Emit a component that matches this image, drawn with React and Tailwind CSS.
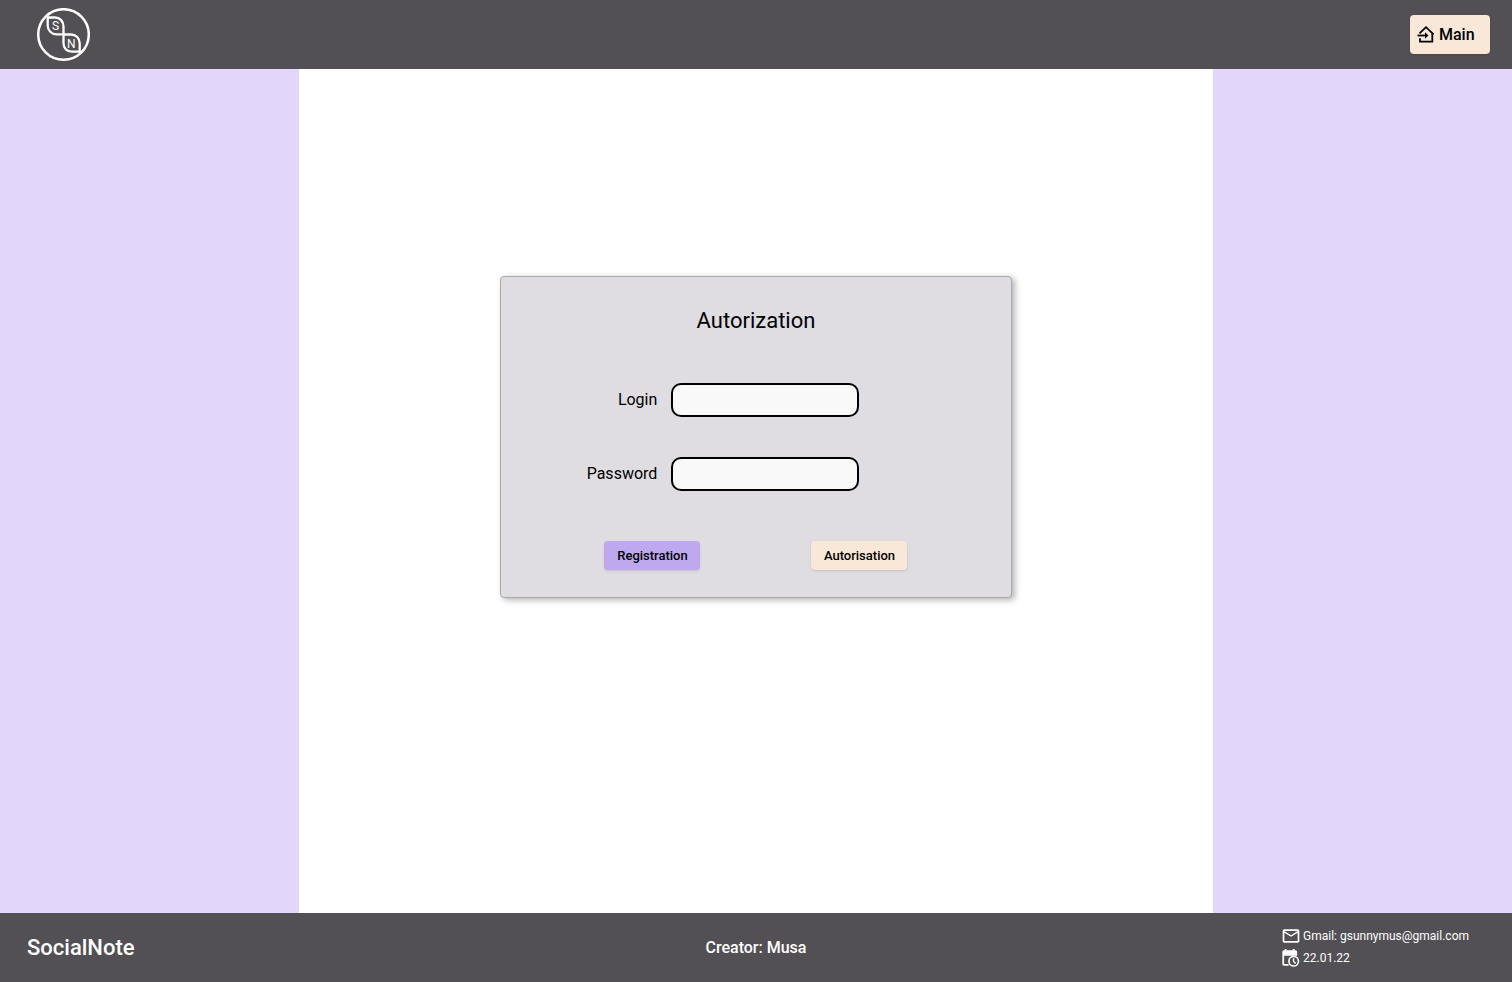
import React from "react";
import { MdOutlineMail } from "react-icons/md";

function Logo() {
  return (
    <svg viewBox="0 0 54 54" className="size-[54px]" role="img" aria-label="SocialNote logo">
      <g fill="none" stroke="white" strokeWidth="2.300">
        <circle cx="27.500" cy="26.500" r="25.300" strokeWidth="2.500" />
        <path d="M11.700 9.500H19C24 9.500 27.500 13.500 27.500 18.500V26.300H20.500C15.500 26.300 11.700 22.500 11.700 17.500Z" />
        <path d="M27.500 26.500H35C40 26.500 43.700 30.300 43.700 35.300V43.700H36C31 43.700 27.500 40.200 27.500 35.200Z" />
      </g>
      <g fill="white" textAnchor="middle" fontFamily="Roboto, sans-serif" fontSize="12">
        <text x="19.600" y="22.300">S</text>
        <text x="35.400" y="39.500">N</text>
      </g>
    </svg>
  );
}

function HomeEnterIcon() {
  return (
    <svg viewBox="0 0 18 18" className="size-[18px]" aria-hidden="true">
      <g fill="none" stroke="currentColor" strokeWidth="1.800">
        <path d="M2.500 7.300L9 1.200L16.600 8.300" />
        <path d="M3 12.300V15.600H15.300V7.300" />
        <path d="M0.500 9.500H9" />
      </g>
      <path d="M8 6.300L11.500 9.500L8 12.700Z" fill="currentColor" />
    </svg>
  );
}

function CalendarClockIcon() {
  return (
    <svg viewBox="0 0 18 18" className="size-5" aria-hidden="true">
      <path
        fill="currentColor"
        d="M3.300 0.800h1.600V2h5.700V0.800h1.600V2h0.800a1.500 1.500 0 0 1 1.500 1.500V7H2.800v7.400h4V16H2.700A1.500 1.500 0 0 1 1.200 14.500V3.500A1.500 1.500 0 0 1 2.700 2H3.300Z"
      />
      <circle cx="11.400" cy="11.900" r="4.300" fill="none" stroke="currentColor" strokeWidth="1.500" />
      <path d="M11.300 9.300V12.100L13.200 13.900" fill="none" stroke="currentColor" strokeWidth="1.200" />
    </svg>
  );
}

function Field({ id, label, type }) {
  return (
    <div className="grid grid-cols-[156fr_339fr] items-center gap-x-[14px]">
      <label htmlFor={id} className="text-right text-base">
        {label}
      </label>
      <input
        id={id}
        type={type}
        className="h-[34px] w-[188px] rounded-[10px] border-2 border-black bg-[#f9f9f9] px-2"
      />
    </div>
  );
}

export default function App() {
  return (
    <div className="flex min-h-screen flex-col bg-[#e2d7fb] font-['Roboto',sans-serif] text-black">
      <header className="flex h-[69px] items-center justify-between bg-[#525055] pr-[22px] pl-9">
        <a href="#home">
          <Logo />
        </a>
        <button
          type="button"
          className="flex h-[39px] w-20 items-center gap-1 rounded bg-[#f9e8d7] pl-[7px] text-base font-medium shadow-sm"
        >
          <HomeEnterIcon />
          Main
        </button>
      </header>

      <div className="grid grow grid-cols-[299fr_914fr_299fr]">
        <main className="col-start-2 flex items-start justify-center bg-white pt-[207px]">
          <form className="w-[56%] rounded border border-[#a9a8aa] bg-[#dfdde2] pt-7 pb-[27px] shadow-[3px_2px_6px_rgba(0,0,0,0.3)]">
            <h1 className="text-center text-[22px] leading-8">Autorization</h1>
            <div className="mt-[46px] flex flex-col gap-10">
              <Field id="login" label="Login" type="text" />
              <Field id="password" label="Password" type="password" />
            </div>
            <div className="mt-[50px] flex justify-center gap-[111px]">
              <button
                type="button"
                className="h-[29px] w-24 rounded bg-[#bea8ee] text-[13px] font-medium shadow-sm"
              >
                Registration
              </button>
              <button
                type="button"
                className="h-[29px] w-24 rounded bg-[#f9e8d7] text-[13px] font-medium shadow-sm"
              >
                Autorisation
              </button>
            </div>
          </form>
        </main>
      </div>

      <footer className="grid h-[69px] grid-cols-3 items-center bg-[#525055] px-[27px] text-white">
        <p className="text-[22px] font-medium">SocialNote</p>
        <p className="text-center text-base font-medium">Creator: Musa</p>
        <div className="flex flex-col gap-0.5 justify-self-end pr-4 pb-0.5 text-xs">
          <p className="flex items-center gap-0.5">
            <MdOutlineMail className="size-5" />
            Gmail: gsunnymus@gmail.com
          </p>
          <p className="flex items-center gap-0.5">
            <CalendarClockIcon />
            22.01.22
          </p>
        </div>
      </footer>
    </div>
  );
}
